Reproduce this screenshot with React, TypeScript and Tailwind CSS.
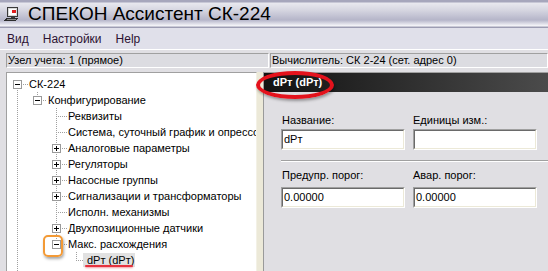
import React from "react";

type Row = { level: number; text: string; box?: "minus" | "plus"; selected?: boolean };

const rows: Row[] = [
  { level: 0, text: "СК-224", box: "minus" },
  { level: 1, text: "Конфигурирование", box: "minus" },
  { level: 2, text: "Реквизиты" },
  { level: 2, text: "Система, суточный график и опрессовка" },
  { level: 2, text: "Аналоговые параметры", box: "plus" },
  { level: 2, text: "Регуляторы", box: "plus" },
  { level: 2, text: "Насосные группы", box: "plus" },
  { level: 2, text: "Сигнализации и трансформаторы", box: "plus" },
  { level: 2, text: "Исполн. механизмы" },
  { level: 2, text: "Двухпозиционные датчики", box: "plus" },
  { level: 2, text: "Макс. расхождения", box: "minus" },
  { level: 3, text: "dPт (dPт)", selected: true },
];

const levelCls = [
  { pad: "pl-[6px]", gap: "ml-[7px]" },
  { pad: "pl-[26px]", gap: "ml-[6px]" },
  { pad: "pl-[45px]", gap: "ml-[7px]" },
  { pad: "pl-[65px]", gap: "ml-[6px]" },
];

// tree panel content origin on the page
const OX = 7;
const OY = 73;

function vdots(x: number, y1: number, y2: number) {
  let d = "";
  for (let y = y1; y <= y2; y += 2) d += `M${x - OX} ${y - OY}h1v1h-1z`;
  return d;
}
function hdots(y: number, x1: number, x2: number) {
  let d = "";
  for (let x = x1; x <= x2; x += 2) d += `M${x - OX} ${y - OY}h1v1h-1z`;
  return d;
}

function treeLines() {
  let d = "";
  d += vdots(17, 90, 271);
  d += hdots(84, 23, 27);
  d += vdots(37, 92, 95);
  d += hdots(100, 43, 46);
  d += vdots(56, 108, 244);
  rows.forEach((r, i) => {
    if (r.level !== 2) return;
    const y = 84 + 16 * i;
    if (r.box) d += hdots(y, 62, 66);
    else d += hdots(y, 56, 66);
  });
  d += vdots(76, 252, 260);
  d += hdots(260, 76, 84);
  return d;
}

function ExpandBox({ kind }: { kind: "minus" | "plus" }) {
  return (
    <svg width="9" height="9" viewBox="0 0 9 9" shapeRendering="crispEdges" className="shrink-0">
      <rect x="0.5" y="0.5" width="8" height="8" fill="#ffffff" stroke="#9a9a9a" />
      <path d="M2 4.5h5" stroke="#000" />
      {kind === "plus" && <path d="M4.5 2v5" stroke="#000" />}
    </svg>
  );
}

function AppIcon() {
  return (
    <svg width="16" height="16" viewBox="0 0 16 16" shapeRendering="crispEdges" className="shrink-0">
      <rect x="4.5" y="1.5" width="10" height="9" fill="#d8d8d8" stroke="#3a3a3a" />
      <rect x="6" y="3" width="7" height="6" fill="#ffffff" />
      <rect x="9" y="4" width="4" height="3" fill="#e02020" />
      <rect x="8" y="11" width="4" height="1" fill="#3a3a3a" />
      <path d="M3 12h12l-2 3H1z" fill="#2c2c2c" />
      <path d="M4 13h9" stroke="#8a8a8a" />
    </svg>
  );
}

function Field({ value }: { value: string }) {
  return (
    <div className="h-[21px] border border-t-[#a0a0a0] border-l-[#a0a0a0] border-b-white border-r-white">
      <div className="h-full border border-t-[#6a6a6a] border-l-[#6a6a6a] border-b-[#ece9d8] border-r-[#ece9d8] bg-white flex items-center pl-[1px] text-black">
        {value}
      </div>
    </div>
  );
}

export default function App() {
  return (
    <div className="relative w-[548px] h-[271px] overflow-hidden bg-[#e0dfe3] font-['Liberation_Sans',Arial,sans-serif] text-[11px] leading-[13px] text-black flex flex-col">
      {/* Title bar */}
      <div className="h-[28px] shrink-0 flex items-center bg-[linear-gradient(to_bottom,#a6a6bc_0px,#a6a6bc_2px,#e8e8ef_3px,#d6d6e1_10px,#b5b5c9_20px,#d6d6e2_23px,#f7f7fa_26px,#9c9cb2_27px)]">
        <div className="ml-[3px]">
          <AppIcon />
        </div>
        <span className="ml-[9px] text-[19px] leading-[22px] text-black whitespace-nowrap">
          СПЕКОН Ассистент СК-224
        </span>
      </div>

      {/* Menu bar */}
      <div className="h-[22px] shrink-0 flex items-center gap-[14px] pl-[7px] bg-[#e0e0ea] border-b border-b-white text-[12px] leading-[14px] text-[#2c1232]">
        <span>Вид</span>
        <span>Настройки</span>
        <span>Help</span>
      </div>

      <div className="h-[3px] shrink-0" />

      {/* Status row */}
      <div className="h-[15px] shrink-0 flex pl-[6px]">
        <div className="w-[263px] h-full border border-t-[#a0a0a0] border-l-[#a0a0a0] border-b-white border-r-white flex items-center pl-[1px] whitespace-nowrap bg-[#dcdce1]">
          Узел учета: 1 (прямое)
        </div>
        <div className="flex-1 ml-[1px] h-full border border-t-[#a0a0a0] border-l-[#a0a0a0] border-b-white border-r-white flex items-center pl-[1px] whitespace-nowrap bg-[#dcdce1]">
          Вычислитель: СК 2-24 (сет. адрес 0)
        </div>
      </div>

      <div className="h-[4px] shrink-0" />

      {/* Panels */}
      <div className="flex flex-1 min-h-0 pl-[6px]">
        {/* Tree */}
        <div className="w-[251px] shrink-0 relative bg-white border-l border-t border-l-[#a0a0a0] border-t-[#a0a0a0] border-r border-r-[#f3f1e6] overflow-hidden">
          <svg
            className="absolute left-0 top-0"
            width="249"
            height="200"
            viewBox="0 0 249 200"
            shapeRendering="crispEdges"
          >
            <path d={treeLines()} fill="#a0a0a0" />
          </svg>
          <div className="pt-[3px] flex flex-col">
            {rows.map((r, i) => {
              const lc = levelCls[r.level];
              return (
                <div key={i} className={`relative h-[16px] flex items-center whitespace-nowrap ${lc.pad}`}>
                  {r.box ? <ExpandBox kind={r.box} /> : <span className="w-[9px] shrink-0" />}
                  {r.selected ? (
                    <span className="ml-[2px] pl-[4px] pr-[1px] h-[14px] flex items-center bg-[#e1e1e1]">{r.text}</span>
                  ) : (
                    <span className={lc.gap}>{r.text}</span>
                  )}
                </div>
              );
            })}
          </div>
        </div>

        {/* Splitter */}
        <div className="w-[6px] shrink-0 bg-[#ece9d8]" />

        {/* Right panel */}
        <div className="flex-1 flex flex-col border-l border-t border-l-[#9a9a9a] border-t-[#a0a0a0] bg-[#e0dfe3]">
          <div className="h-[19px] shrink-0 flex items-center pl-[9px] bg-[linear-gradient(to_right,#121212,#4b4b4b)] text-white font-bold whitespace-nowrap">
            dPт (dPт)
          </div>
          <div className="pl-[17px] pt-[22px] flex flex-col">
            <div className="grid grid-cols-[124px_124px] gap-x-[8px]">
              <span className="pl-[1px] h-[13px]">Название:</span>
              <span className="h-[13px]">Единицы изм.:</span>
              <div className="mt-[2px]">
                <Field value="dPт" />
              </div>
              <div className="mt-[2px]">
                <Field value="" />
              </div>
            </div>
            <div className="mt-[10px] h-px bg-[#a0a0a0]" />
            <div className="h-px bg-white" />
            <div className="mt-[7px] grid grid-cols-[124px_124px] gap-x-[8px]">
              <span className="pl-[1px] h-[13px]">Предупр. порог:</span>
              <span className="h-[13px]">Авар. порог:</span>
              <div className="mt-[5px]">
                <Field value="0.00000" />
              </div>
              <div className="mt-[5px]">
                <Field value="0.00000" />
              </div>
            </div>
          </div>
        </div>
      </div>

      {/* Annotation overlays */}
      <div className="absolute left-[256px] top-[71px] w-[78px] h-[28px] rounded-[50%] border-[4px] border-[#e4121c] shadow-[1px_2px_3px_rgba(0,0,0,0.35)]" />
      <div className="absolute left-[43px] top-[235px] w-[20px] h-[22px] rounded-[5px] border-2 border-[#f39a36] shadow-[1px_2px_3px_rgba(0,0,0,0.35)]" />
      <div className="absolute left-[85px] top-[265px] w-[48px] h-[2px] rounded-full bg-[#e6323e] shadow-[0_1px_2px_rgba(230,50,62,0.5)]" />
    </div>
  );
}
